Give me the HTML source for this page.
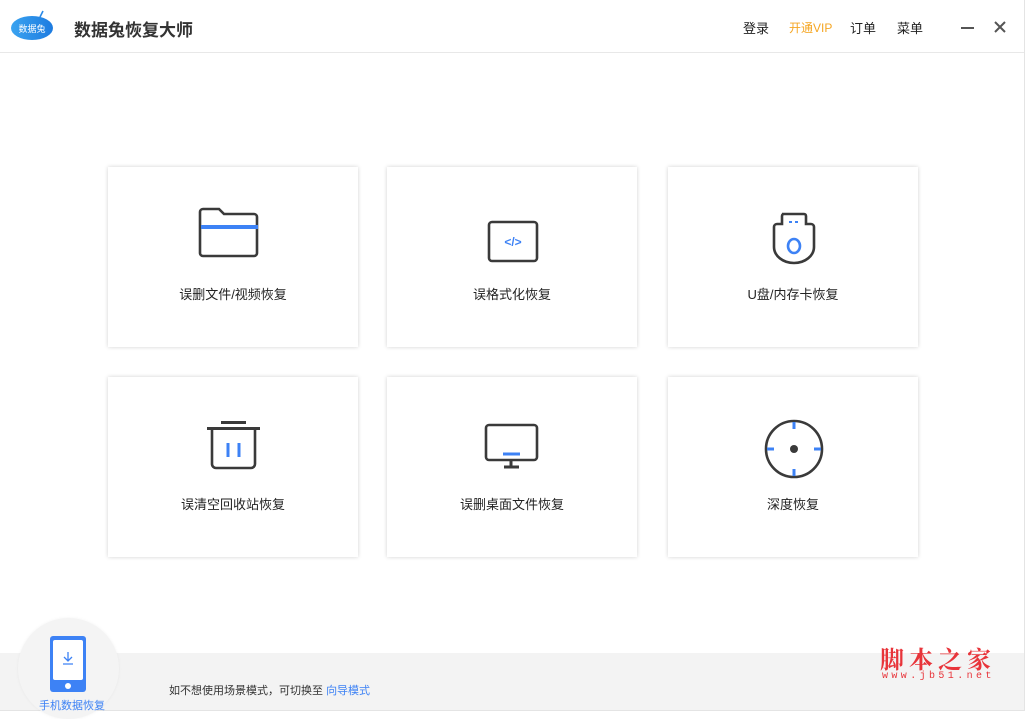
<!DOCTYPE html>
<html><head><meta charset="utf-8"><style>
*{margin:0;padding:0;box-sizing:border-box}
body{width:1028px;height:713px;background:#fff;position:relative;overflow:hidden;font-family:"Liberation Sans","Noto Sans CJK SC",sans-serif}
.win{position:absolute;left:0;top:0;width:1025px;height:711px;border-right:1px solid #e4e4e4;border-bottom:1px solid #e4e4e4;background:#fff}
.hdr{position:absolute;left:0;top:0;width:1024px;height:53px;border-bottom:1px solid #e8e8e8}
.t{position:absolute;font-size:13px;color:#222;white-space:nowrap}
.card{position:absolute;width:250px;height:180px;background:#fff;box-shadow:0 0 4px rgba(0,0,0,.18)}
.card svg{position:absolute;left:0;top:0}
.card .lbl{position:absolute;left:0;width:250px;top:117px;text-align:center;font-size:13px;color:#222}
.band{position:absolute;left:0;top:653px;width:1024px;height:57px;background:#f3f3f3}
</style></head><body>
<div class="win">
<div class="hdr">
 <svg style="position:absolute;left:10px;top:10px" width="44" height="32" viewBox="0 0 44 32">
  <defs><linearGradient id="g" x1="0" x2="1"><stop offset="0" stop-color="#3aa3f0"/><stop offset="1" stop-color="#1d7be0"/></linearGradient></defs>
  <path d="M30 7 L33 1" stroke="#2a8ae8" stroke-width="1.6"/>
  <ellipse cx="22" cy="18" rx="21" ry="12" fill="url(#g)"/>
  <text x="22" y="22" font-size="9" fill="#fff" text-anchor="middle" font-family="Noto Sans CJK SC">数据兔</text>
 </svg>
 <div class="t" style="left:74px;top:16px;font-size:17px;font-weight:bold;color:#333">数据兔恢复大师</div>
 <div class="t" style="left:743px;top:18px">登录</div>
 <div class="t" style="left:789px;top:19px;color:#f5a623;font-size:12px">开通VIP</div>
 <div class="t" style="left:850px;top:18px">订单</div>
 <div class="t" style="left:897px;top:18px">菜单</div>
 <div style="position:absolute;left:961px;top:27px;width:13px;height:2px;background:#555"></div>
 <svg style="position:absolute;left:994px;top:21px" width="12" height="12"><path d="M1 1L11 11M11 1L1 11" stroke="#555" stroke-width="2"/></svg>
</div>

<div class="card" style="left:108px;top:167px">
 <svg width="250" height="180"><path d="M95 42 h16 l5 5 h30 a3 3 0 0 1 3 3 v36 a3 3 0 0 1 -3 3 h-51 a3 3 0 0 1 -3 -3 v-41 a3 3 0 0 1 3 -3z" fill="none" stroke="#3a3a3a" stroke-width="2.6"/><rect x="93" y="58" width="57" height="4" fill="#3d82f5"/></svg>
 <div class="lbl">误删文件/视频恢复</div></div>
<div class="card" style="left:387px;top:167px">
 <svg width="250" height="180"><rect x="102" y="55" width="48" height="39" rx="3" fill="none" stroke="#3a3a3a" stroke-width="2.6"/><text x="126" y="79" font-size="12" font-weight="bold" fill="#3d82f5" text-anchor="middle" font-family="Liberation Sans">&lt;/&gt;</text></svg>
 <div class="lbl">误格式化恢复</div></div>
<div class="card" style="left:668px;top:167px">
 <svg width="250" height="180"><path d="M114 47 h22 a2 2 0 0 1 2 2 v8 h5 a3 3 0 0 1 3 3 v20 a20 16 0 0 1 -40 0 v-20 a3 3 0 0 1 3 -3 h5 v-8 a2 2 0 0 1 2 -2z" fill="none" stroke="#3a3a3a" stroke-width="2.6"/><path d="M121 55h3M127 55h3" stroke="#3d82f5" stroke-width="2"/><ellipse cx="126" cy="79" rx="6" ry="7" fill="none" stroke="#3d82f5" stroke-width="2.6"/></svg>
 <div class="lbl">U盘/内存卡恢复</div></div>

<div class="card" style="left:108px;top:377px">
 <svg width="250" height="180"><rect x="113" y="44" width="25" height="3" fill="#3a3a3a"/><rect x="99" y="50" width="53" height="3" fill="#3a3a3a"/><path d="M104 53 v34 a4 4 0 0 0 4 4 h35 a4 4 0 0 0 4 -4 v-34" fill="none" stroke="#3a3a3a" stroke-width="2.6"/><path d="M120 66v14M131 66v14" stroke="#3d82f5" stroke-width="3"/></svg>
 <div class="lbl">误清空回收站恢复</div></div>
<div class="card" style="left:387px;top:377px">
 <svg width="250" height="180"><rect x="99" y="48" width="51" height="35" rx="3" fill="none" stroke="#3a3a3a" stroke-width="2.6"/><path d="M116 77h17" stroke="#3d82f5" stroke-width="3"/><path d="M124 84v5M117 90h15" stroke="#3a3a3a" stroke-width="3"/></svg>
 <div class="lbl">误删桌面文件恢复</div></div>
<div class="card" style="left:668px;top:377px">
 <svg width="250" height="180"><circle cx="126" cy="72" r="28" fill="none" stroke="#3a3a3a" stroke-width="2.6"/><circle cx="126" cy="72" r="4" fill="#3a3a3a"/><path d="M126 45v7M126 92v7M99 72h7M146 72h7" stroke="#3d82f5" stroke-width="3"/></svg>
 <div class="lbl">深度恢复</div></div>

<div class="band"></div>
<div style="position:absolute;left:18px;top:618px;width:101px;height:101px;border-radius:50%;background:#f4f4f4;box-shadow:0 0 3px rgba(0,0,0,.05)"></div>
<svg style="position:absolute;left:50px;top:636px" width="36" height="56"><rect x="0" y="0" width="36" height="56" rx="3" fill="#3d82f5"/><rect x="3" y="4" width="30" height="40" rx="2" fill="#fff"/><circle cx="18" cy="50" r="3" fill="#fff"/><path d="M18 16v9M14 21l4 4 4-4M13 28h10" stroke="#3d82f5" stroke-width="1.3" fill="none"/></svg>
<div class="t" style="left:39px;top:697px;font-size:11px;color:#3d82f5">手机数据恢复</div>
<div class="t" style="left:169px;top:682px;font-size:11px;color:#333">如不想使用场景模式，可切换至 <span style="color:#3d82f5">向导模式</span></div>
<div class="t" style="left:880px;top:640px;font-size:24px;font-weight:bold;color:#e8343a;letter-spacing:5px;font-family:'Noto Serif CJK SC',serif">脚本之家</div>
<div class="t" style="left:882px;top:671px;font-size:10px;color:#e8343a;letter-spacing:3.4px;font-family:'Liberation Mono',monospace">www.jb51.net</div>
</div>
</body></html>
